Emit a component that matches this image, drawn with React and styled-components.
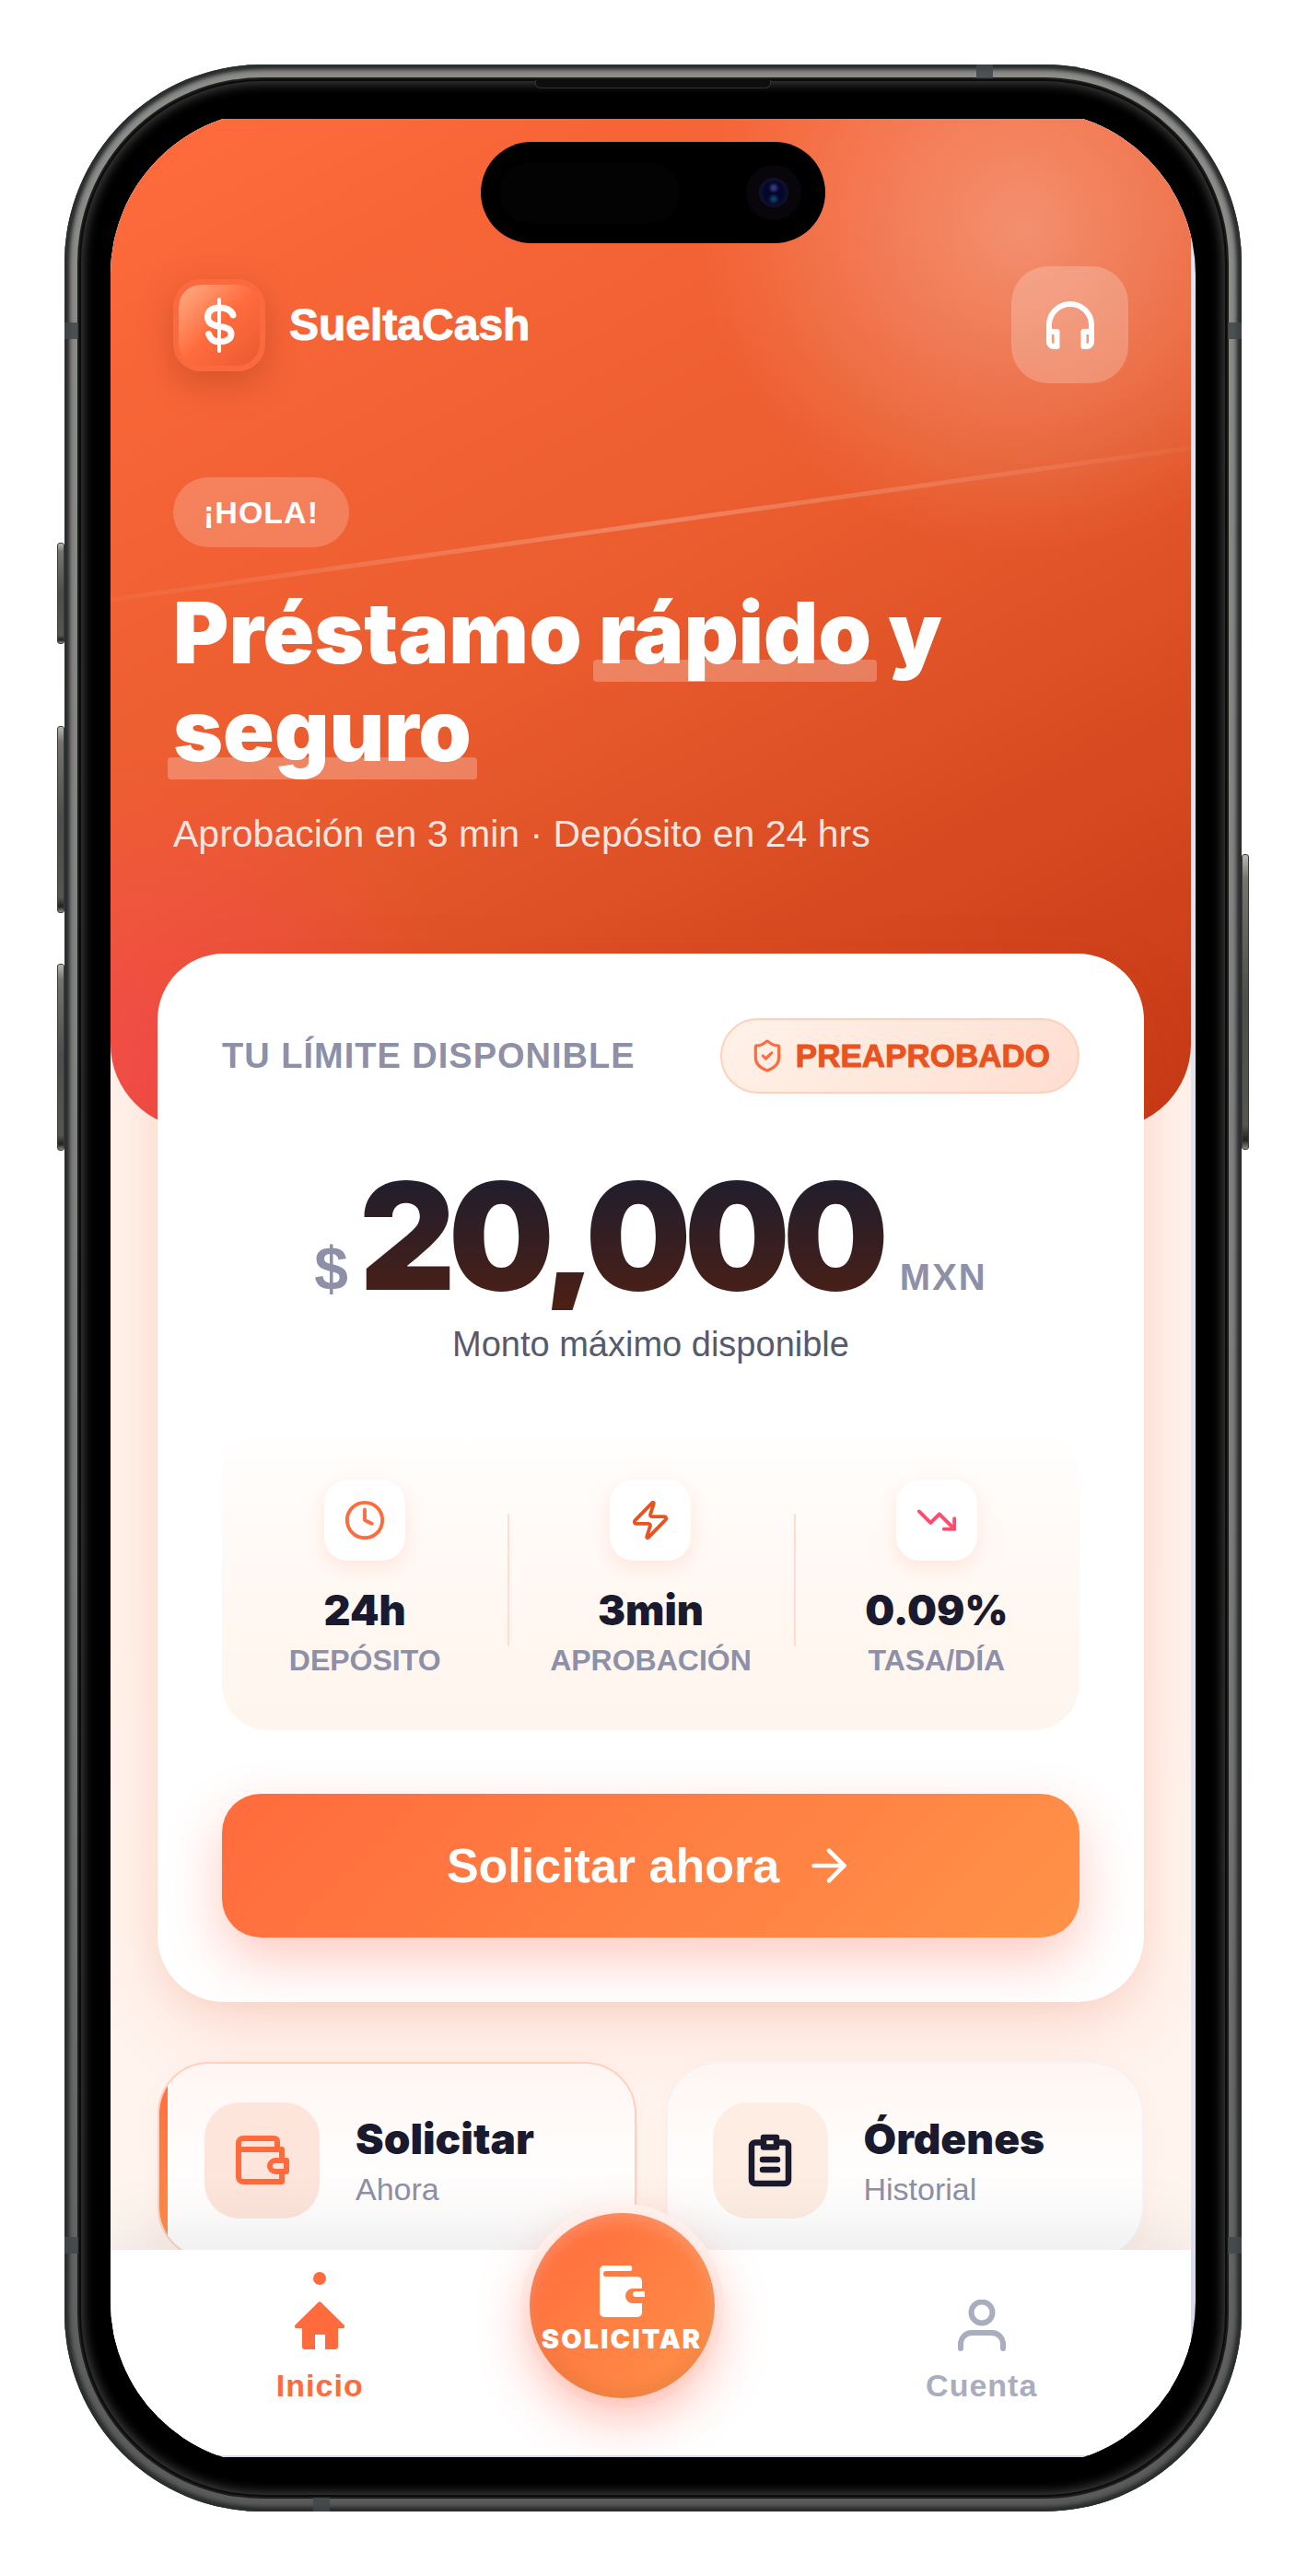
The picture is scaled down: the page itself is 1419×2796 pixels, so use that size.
import React from 'react';
import styled, { createGlobalStyle, css } from 'styled-components';
import { ShieldCheck, Clock, Zap, TrendingDown, ArrowRight } from 'lucide-react';

const GlobalStyle = createGlobalStyle`
  *, *::before, *::after { box-sizing: border-box; }
  body {
    margin: 0;
    background: #ffffff;
    font-family: "Liberation Sans", Arial, sans-serif;
  }
  button { font: inherit; border: 0; cursor: pointer; }
  a { text-decoration: none; color: inherit; }
  h1, h2, p, dl, dd, dt { margin: 0; }
`;

const display = css`
  font-family: Inter, "Liberation Sans", sans-serif;
  font-weight: 900;
`;

/* ---------- Device ---------- */

const Page = styled.div`
  padding: 70px 71px 70px 70px;
`;

const Phone = styled.div`
  position: relative;
  padding: 16px;
  border-radius: 215px;
  background: linear-gradient(180deg, #8f8e8b 0%, #7c7c7a 60%, #5a5b5a 100%);
  box-shadow: inset 0 0 3px 4px #2b2e2f, inset 0 0 5px 6px #3d3f40;
`;

const Bezel = styled.div`
  padding: 34px;
  border-radius: 199px;
  background: #000000;
  box-shadow: 0 0 0 2px #1c1d1d, inset 0 0 0 2px #0b0b0b, inset 0 0 12px 5px #3f3f3f;
`;

const Screen = styled.div`
  overflow: hidden;
  padding: 9px 0;
  border-radius: 178px;
  background: #000000;
`;

const Viewport = styled.div`
  padding: 0 5px 2px 0;
  background: #dfe5f4;
`;

const SideKey = styled.span`
  position: absolute;
  ${(p) => p.$side}: -8px;
  top: ${(p) => p.$top}px;
  width: 8px;
  height: ${(p) => p.$length}px;
  border: 1px solid #3b3c3a;
  border-radius: 3px;
  background: linear-gradient(180deg, #b9b8b2 0%, #75756f 8%, #4c4e4b 50%, #55564f 92%, #222 97%, #8a8a84 100%);
`;

const Band = styled.span`
  position: absolute;
  background: rgba(66, 70, 74, 0.85);
  ${(p) =>
    p.$edge === 'left' || p.$edge === 'right'
      ? css`width: 15px; height: 18px;`
      : css`width: 18px; height: 15px;`}
  ${(p) => p.$edge}: 0;
  ${(p) => p.$from}: ${(p) => p.$at}px;
`;

const Earpiece = styled.span`
  position: absolute;
  top: 17px;
  left: 50%;
  width: 256px;
  height: 9px;
  transform: translateX(-50%);
  border: 1px solid #333333;
  border-top: 0;
  border-radius: 0 0 6px 6px;
  background: #0e0e0e;
`;

const Island = styled.div`
  position: absolute;
  top: 84px;
  left: 50%;
  display: flex;
  align-items: center;
  justify-content: space-between;
  width: 374px;
  height: 110px;
  padding: 0 26px 0 20px;
  transform: translateX(-50%);
  border-radius: 55px;
  background: #000000;
`;

const Sensor = styled.span`
  width: 196px;
  height: 66px;
  border-radius: 33px;
  background: #030303;
`;

const Camera = styled.span`
  width: 60px;
  height: 60px;
  border: 14px solid #08060a;
  border-radius: 50%;
  background:
    radial-gradient(circle at 50% 34%, #34387c 0 6%, transparent 22%),
    radial-gradient(circle at 50% 72%, #123f5a 0 5%, transparent 22%),
    radial-gradient(circle, #04062c 0 45%, #12142c 72%);
`;

/* ---------- Hero ---------- */

const Body = styled.main`
  background: linear-gradient(180deg, #fff3ec 0%, #fff3ec 60%, #fff6f0 100%);
`;

const Hero = styled.section`
  position: relative;
  overflow: hidden;
  padding: 160px 68px 296px;
  border-radius: 0 0 92px 92px;
  color: #ffffff;
  background:
    radial-gradient(circle 350px at 990px 120px, rgba(255, 255, 255, 0.3), rgba(255, 255, 255, 0) 100%),
    radial-gradient(circle 350px at 40px 1030px, rgba(255, 71, 100, 0.55), rgba(255, 71, 100, 0) 100%),
    linear-gradient(152deg, #ff6b3d 0%, #e95b2d 50%, #c43815 100%);

  &::before {
    content: "";
    position: absolute;
    top: 437px;
    left: -10%;
    width: 120%;
    height: 5px;
    transform: rotate(-8deg);
    background: linear-gradient(90deg, transparent, rgba(255, 255, 255, 0.24), transparent);
  }
`;

const TopBar = styled.header`
  display: flex;
  align-items: center;
  justify-content: space-between;
`;

const Brand = styled.div`
  display: flex;
  align-items: center;
  gap: 26px;
  font-size: 48px;
  font-weight: 700;
  line-height: 56px;
  -webkit-text-stroke: 1px currentColor;
`;

const Logo = styled.span`
  display: grid;
  place-items: center;
  width: 100px;
  height: 100px;
  border: 6px solid #fb6a3f;
  border-radius: 30px;
  background: linear-gradient(135deg, #ffae85 0%, #ff6b3d 50%, #ea5a30 100%) padding-box;
  box-shadow: 0 12px 36px rgba(150, 50, 20, 0.35);
`;

const SupportButton = styled.button`
  display: grid;
  place-items: center;
  width: 127px;
  height: 127px;
  padding: 0;
  border-radius: 40px;
  color: #ffffff;
  background: rgba(255, 255, 255, 0.22);
`;

const Greeting = styled.p`
  width: fit-content;
  margin-top: 102px;
  padding: 0 33px;
  border-radius: 38px;
  background: rgba(255, 255, 255, 0.2);
  font-size: 34px;
  font-weight: 700;
  line-height: 76px;
  letter-spacing: 1px;
`;

const Headline = styled.h1`
  ${display}
  position: relative;
  z-index: 0;
  margin-top: 40px;
  font-size: 92px;
  line-height: 106px;
`;

const Mark = styled.span`
  position: relative;

  &::after {
    content: "";
    position: absolute;
    z-index: -1;
    right: -6px;
    bottom: 2px;
    left: -6px;
    height: 24px;
    border-radius: 4px;
    background: rgba(255, 255, 255, 0.25);
  }
`;

const Tagline = styled.p`
  margin-top: 35px;
  color: rgba(255, 255, 255, 0.85);
  font-size: 41px;
  line-height: 48px;
`;

/* ---------- Limit card ---------- */

const Content = styled.div`
  position: relative;
  margin-top: -190px;
  padding: 0 51px;
`;

const LimitCard = styled.section`
  padding: 70px;
  border-radius: 72px;
  background: #ffffff;
  box-shadow: 0 30px 80px rgba(226, 80, 40, 0.14), 0 10px 30px rgba(226, 80, 40, 0.07);
`;

const CardHead = styled.div`
  display: flex;
  align-items: center;
  justify-content: space-between;
`;

const CardTitle = styled.h2`
  color: #8d90a7;
  font-size: 38px;
  font-weight: 700;
  line-height: 44px;
  letter-spacing: 1px;
`;

const Approved = styled.span`
  display: flex;
  align-items: center;
  gap: 12px;
  height: 82px;
  padding: 0 30px;
  border: 2px solid #ffd0bd;
  border-radius: 41px;
  color: #e9531f;
  background: linear-gradient(135deg, #fff2e9, #ffded0);
  font-size: 35px;
  font-weight: 700;
  -webkit-text-stroke: 1px #e9531f;

  svg { color: #ff6b3d; }
`;

const Amount = styled.p`
  display: flex;
  align-items: baseline;
  justify-content: center;
  gap: 12px;
  margin-top: 73px;
  color: #8d90a7;
  font-weight: 700;
  line-height: 1;
`;

const Currency = styled.span`
  font-size: 66px;
`;

const Figure = styled.span`
  ${display}
  padding-right: 8px;
  font-size: 162px;
  letter-spacing: -0.05em;
  color: transparent;
  background: linear-gradient(180deg, #1a1d30 0%, #4d2015 100%);
  background-clip: text;
`;

const Unit = styled.span`
  font-size: 40px;
  letter-spacing: 2px;
`;

const AmountNote = styled.p`
  margin-top: 15px;
  color: #555b6e;
  font-size: 38px;
  line-height: 44px;
  text-align: center;
`;

const Stats = styled.dl`
  display: grid;
  grid-template-columns: repeat(3, 1fr);
  margin-top: 69px;
  padding: 56px 0;
  border-radius: 50px;
  background: linear-gradient(180deg, #ffffff 0%, #fff7f1 60%, #fff5ef 100%);
`;

const Stat = styled.div`
  position: relative;
  display: flex;
  flex-direction: column;
  align-items: center;

  & + &::before {
    content: "";
    position: absolute;
    top: 37px;
    left: 0;
    width: 2px;
    height: 144px;
    background: #ffddd0;
  }
`;

const StatIcon = styled.span`
  display: grid;
  place-items: center;
  width: 88px;
  height: 88px;
  border-radius: 26px;
  color: ${(p) => p.$tone};
  background: #ffffff;
  box-shadow: 0 6px 22px rgba(255, 107, 61, 0.14);
`;

const StatValue = styled.dd`
  ${display}
  order: 1;
  margin-top: 28px;
  color: #1a1a2e;
  font-size: 45px;
  line-height: 52px;
`;

const StatLabel = styled.dt`
  order: 2;
  margin-top: 8px;
  color: #8d90a7;
  font-size: 32px;
  font-weight: 700;
  line-height: 40px;
`;

const ApplyButton = styled.button`
  display: flex;
  align-items: center;
  justify-content: center;
  gap: 26px;
  width: 100%;
  height: 156px;
  margin-top: 69px;
  border-radius: 42px;
  color: #ffffff;
  background: linear-gradient(135deg, #ff6b3d 0%, #ff9248 100%);
  box-shadow: 0 24px 60px rgba(255, 90, 61, 0.32);
  font-size: 52px;
  font-weight: 700;
`;

/* ---------- Shortcuts ---------- */

const Shortcuts = styled.div`
  display: grid;
  grid-template-columns: 1fr 1fr;
  gap: 32px;
  margin-top: 65px;
`;

const Shortcut = styled.a`
  position: relative;
  overflow: hidden;
  display: flex;
  align-items: center;
  gap: 39px;
  height: 214px;
  padding: 0 49px;
  border: 2px solid ${(p) => (p.$active ? '#ffd0c0' : 'rgba(240, 236, 240, 0.6)')};
  border-radius: 56px;
  background: linear-gradient(180deg, #fff5f2 0%, #fffdfc 45%, #ffffff 100%);
  box-shadow: 0 8px 30px rgba(226, 80, 40, 0.05);

  ${(p) =>
    p.$active &&
    css`
      &::before {
        content: "";
        position: absolute;
        top: 0;
        bottom: 0;
        left: 0;
        width: 9px;
        background: linear-gradient(180deg, #ff6b3d, #ff9248);
      }
    `}
`;

const ShortcutIcon = styled.span`
  display: grid;
  flex: none;
  place-items: center;
  width: 125px;
  height: 126px;
  border-radius: 38px;
  color: ${(p) => p.$tone};
  background: ${(p) => p.$fill};
`;

const ShortcutText = styled.span`
  display: flex;
  flex-direction: column;
  gap: 9px;
`;

const ShortcutTitle = styled.strong`
  ${display}
  color: #1a1a2e;
  font-size: 46px;
  line-height: 52px;
`;

const ShortcutNote = styled.span`
  color: #8d90a7;
  font-size: 34px;
  line-height: 40px;
`;

/* ---------- Bottom navigation ---------- */

const TabBar = styled.nav`
  position: relative;
  display: grid;
  grid-template-columns: 31fr 18fr 31fr;
  margin-top: -10px;
  padding-bottom: 56px;
  background: #ffffff;
  box-shadow: 0 -10px 80px rgba(20, 20, 40, 0.1);
`;

const Tab = styled.a`
  display: flex;
  flex-direction: column;
  align-items: center;
  padding-top: 24px;
  color: ${(p) => (p.$active ? '#ff6b3d' : '#a8adbf')};
  font-size: 34px;
  font-weight: 700;
  line-height: 40px;
  letter-spacing: 1px;

  &::before {
    content: "";
    width: 14px;
    height: 14px;
    margin-bottom: 16px;
    border-radius: 50%;
    background: ${(p) => (p.$active ? 'currentColor' : 'transparent')};
  }

  svg { margin-bottom: 17px; }
`;

const ApplyTab = styled.button`
  ${display}
  display: flex;
  flex-direction: column;
  align-items: center;
  gap: 6px;
  width: 201px;
  height: 201px;
  margin-top: -40px;
  padding: 55px 0 0;
  border-radius: 50%;
  color: #ffffff;
  background: linear-gradient(135deg, #ff6b3d 0%, #ff9248 100%);
  box-shadow:
    0 20px 56px rgba(255, 90, 61, 0.42),
    0 0 0 10px rgba(255, 250, 248, 0.94),
    inset 0 8px 16px rgba(255, 255, 255, 0.2),
    inset 0 -8px 16px rgba(120, 70, 20, 0.14);
  font-size: 29px;
  line-height: 32px;
  letter-spacing: 2px;
`;

/* ---------- Drawn icons ---------- */

const DollarIcon = () => (
  <svg width="40" height="60" viewBox="0 0 40 60" fill="none" stroke="#fff" strokeLinecap="round" aria-hidden="true">
    <path d="M20 2v56" strokeWidth="4" />
    <path d="M35 19c-2-6-8-8-15-8-8 0-12.500 4-12.500 10C7.500 36 33 27 33 39.500c0 6-6 8.500-13 8.500-6 0-9.500-3-11.500-8.500" strokeWidth="7" />
  </svg>
);

const HeadphonesIcon = () => (
  <svg width="52" height="52" viewBox="0 0 52 52" fill="none" stroke="currentColor" strokeWidth="6" strokeLinejoin="round" aria-hidden="true">
    <path d="M3 34V26a23 23 0 0 1 46 0v8" />
    <path d="M3 33h8.500v16H8a5 5 0 0 1-5-5zM49 33h-8.500v16H44a5 5 0 0 0 5-5z" />
  </svg>
);

const WalletIcon = () => (
  <svg width="58" height="54" viewBox="0 0 58 54" fill="none" stroke="currentColor" strokeWidth="6" strokeLinejoin="round" aria-hidden="true">
    <path d="M45 15V6a3 3 0 0 0-3-3H8a5 5 0 0 0-5 5v37a5 5 0 0 0 5 5h42V39M50 27V15H4" />
    <path d="M55 27H43a6 6 0 0 0 0 12h12z" />
  </svg>
);

const ClipboardIcon = () => (
  <svg width="48" height="58" viewBox="0 0 48 58" fill="none" stroke="currentColor" strokeWidth="6.500" strokeLinejoin="round" strokeLinecap="round" aria-hidden="true">
    <path d="M14 9.500H8a4 4 0 0 0-4 4V50a4 4 0 0 0 4 4h32a4 4 0 0 0 4-4V13.500a4 4 0 0 0-4-4h-6" />
    <path d="M17 4h14v10.500H17zM16 28h16M16 39h16" />
  </svg>
);

const HomeIcon = () => (
  <svg width="56" height="56" viewBox="0 0 56 56" fill="currentColor" aria-hidden="true">
    <path d="M27 2.500a2 2 0 0 1 2 0L54 27c2 2 1 4-1 4h-5v20a3 3 0 0 1-3 3H34V38H23v16H12a3 3 0 0 1-3-3V31H3c-2 0-3-2-1-4z" />
  </svg>
);

const AccountIcon = () => (
  <svg width="56" height="56" viewBox="0 0 56 56" fill="none" stroke="currentColor" strokeWidth="6" strokeLinecap="round" aria-hidden="true">
    <circle cx="28" cy="14" r="11.500" />
    <path d="M5 53V48a12 12 0 0 1 12-12h22a12 12 0 0 1 12 12v5" />
  </svg>
);

const WalletSolidIcon = () => (
  <svg width="52" height="60" viewBox="0 0 52 60" aria-hidden="true">
    <path fill="currentColor" d="M7 2h29a4 4 0 0 1 0 6H9a3 3 0 0 0-3 3a3 3 0 0 0 3 3h34a5 5 0 0 1 5 5v8H38a8 8 0 0 0 0 16h10v10a5 5 0 0 1-5 5H7a5 5 0 0 1-5-5V7a5 5 0 0 1 5-5z" />
    <path fill="currentColor" d="M41 30h10v6H41a3 3 0 0 1 0-6z" />
  </svg>
);

const stats = [
  { icon: Clock, tone: '#ff6b3d', value: '24h', label: 'DEPÓSITO' },
  { icon: Zap, tone: '#e8541f', value: '3min', label: 'APROBACIÓN' },
  { icon: TrendingDown, tone: '#ff4b6e', value: '0.09%', label: 'TASA/DÍA' },
];

export default function App() {
  return (
    <Page>
      <GlobalStyle />
      <Phone>
        <SideKey $side="left" $top={519} $length={110} />
        <SideKey $side="left" $top={718} $length={203} />
        <SideKey $side="left" $top={976} $length={203} />
        <SideKey $side="right" $top={857} $length={321} />
        <Band $edge="left" $from="top" $at={280} />
        <Band $edge="right" $from="top" $at={280} />
        <Band $edge="left" $from="bottom" $at={280} />
        <Band $edge="right" $from="bottom" $at={280} />
        <Band $edge="top" $from="right" $at={270} />
        <Band $edge="bottom" $from="left" $at={270} />
        <Bezel>
          <Screen>
            <Viewport>
              <Body>
                <Hero>
                  <TopBar>
                    <Brand>
                      <Logo><DollarIcon /></Logo>
                      SueltaCash
                    </Brand>
                    <SupportButton aria-label="Soporte"><HeadphonesIcon /></SupportButton>
                  </TopBar>
                  <Greeting>¡HOLA!</Greeting>
                  <Headline>
                    Préstamo <Mark>rápido</Mark> y <Mark>seguro</Mark>
                  </Headline>
                  <Tagline>Aprobación en 3 min · Depósito en 24 hrs</Tagline>
                </Hero>
                <Content>
                  <LimitCard>
                    <CardHead>
                      <CardTitle>TU LÍMITE DISPONIBLE</CardTitle>
                      <Approved>
                        <ShieldCheck size={38} strokeWidth={2} aria-hidden="true" />
                        PREAPROBADO
                      </Approved>
                    </CardHead>
                    <Amount>
                      <Currency>$</Currency>
                      <Figure>20,000</Figure>
                      <Unit>MXN</Unit>
                    </Amount>
                    <AmountNote>Monto máximo disponible</AmountNote>
                    <Stats>
                      {stats.map(({ icon: Icon, tone, value, label }) => (
                        <Stat key={label}>
                          <StatIcon $tone={tone}><Icon size={46} strokeWidth={2} aria-hidden="true" /></StatIcon>
                          <StatLabel>{label}</StatLabel>
                          <StatValue>{value}</StatValue>
                        </Stat>
                      ))}
                    </Stats>
                    <ApplyButton>
                      Solicitar ahora
                      <ArrowRight size={56} strokeWidth={2} aria-hidden="true" />
                    </ApplyButton>
                  </LimitCard>
                  <Shortcuts>
                    <Shortcut href="#solicitar" $active>
                      <ShortcutIcon $tone="#ff6b3d" $fill="#fee5dc"><WalletIcon /></ShortcutIcon>
                      <ShortcutText>
                        <ShortcutTitle>Solicitar</ShortcutTitle>
                        <ShortcutNote>Ahora</ShortcutNote>
                      </ShortcutText>
                    </Shortcut>
                    <Shortcut href="#ordenes">
                      <ShortcutIcon $tone="#1a1a2e" $fill="#feede2"><ClipboardIcon /></ShortcutIcon>
                      <ShortcutText>
                        <ShortcutTitle>Órdenes</ShortcutTitle>
                        <ShortcutNote>Historial</ShortcutNote>
                      </ShortcutText>
                    </Shortcut>
                  </Shortcuts>
                </Content>
                <TabBar>
                  <Tab href="#inicio" $active><HomeIcon />Inicio</Tab>
                  <ApplyTab><WalletSolidIcon />SOLICITAR</ApplyTab>
                  <Tab href="#cuenta"><AccountIcon />Cuenta</Tab>
                </TabBar>
              </Body>
            </Viewport>
          </Screen>
        </Bezel>
        <Earpiece />
        <Island><Sensor /><Camera /></Island>
      </Phone>
    </Page>
  );
}
